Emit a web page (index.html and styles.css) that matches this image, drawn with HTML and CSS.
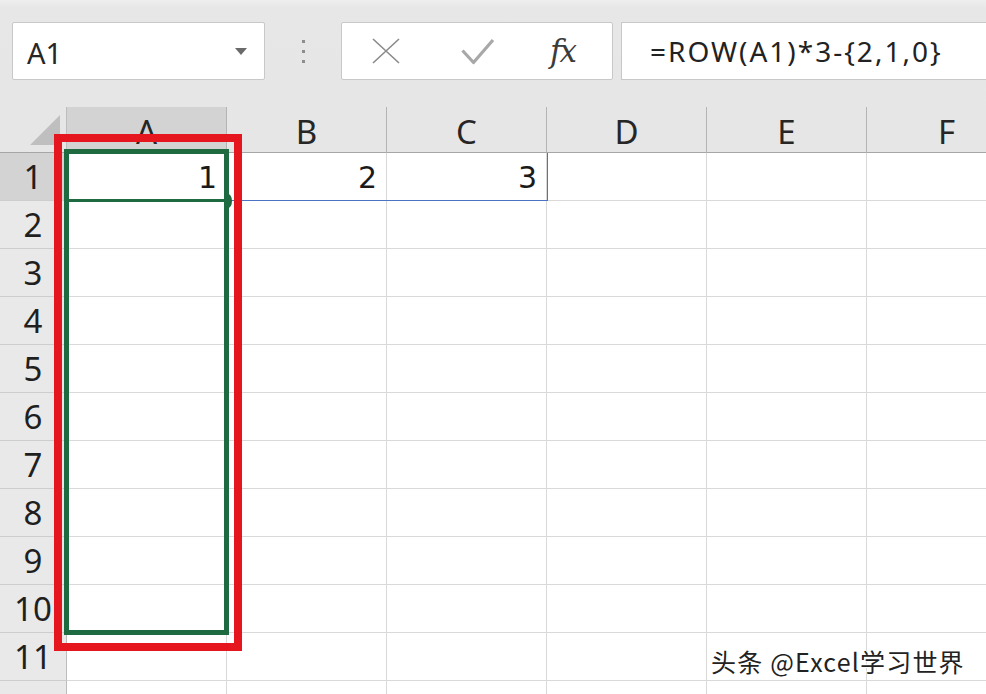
FILE: index.html
```html
<!DOCTYPE html>
<html lang="zh">
<head>
<meta charset="utf-8">
<title>Excel</title>
<link rel="stylesheet" href="styles.css">
</head>
<body>
<div class="app">
  <div class="toolbar">
    <div class="namebox">
      <span class="name">A1</span>
      <svg class="dd" width="12" height="7" viewBox="0 0 12 7"><path d="M0 0H12L6 7Z" fill="#6a6a6a"/></svg>
    </div>
    <div class="dots"><i></i><i></i><i></i></div>
    <div class="fxbtns">
      <svg class="ic-x" width="28" height="26" viewBox="0 0 28 26"><path d="M1 1L27 25M27 1L1 25" stroke="#8a8a8a" stroke-width="1.6" fill="none"/></svg>
      <svg class="ic-ok" width="34" height="28" viewBox="0 0 34 28"><path d="M1.5 12.5L12.5 24.5L32 2" stroke="#a8a8a8" stroke-width="3.2" fill="none" stroke-linejoin="round"/></svg>
      <span class="ic-fx">fx</span>
    </div>
    <div class="formula">=ROW(A1)*3-{2,1,0}</div>
  </div>
  <div class="sheet">
    <div class="grid">
      <div class="corner"><span class="tri"></span></div>
      <div class="ch sel">A</div>
      <div class="ch">B</div>
      <div class="ch">C</div>
      <div class="ch">D</div>
      <div class="ch">E</div>
      <div class="ch">F</div>

      <div class="rh sel">1</div><div class="c">1</div><div class="c">2</div><div class="c">3</div><div class="c"></div><div class="c"></div><div class="c"></div>
      <div class="rh">2</div><div class="c"></div><div class="c"></div><div class="c"></div><div class="c"></div><div class="c"></div><div class="c"></div>
      <div class="rh">3</div><div class="c"></div><div class="c"></div><div class="c"></div><div class="c"></div><div class="c"></div><div class="c"></div>
      <div class="rh">4</div><div class="c"></div><div class="c"></div><div class="c"></div><div class="c"></div><div class="c"></div><div class="c"></div>
      <div class="rh">5</div><div class="c"></div><div class="c"></div><div class="c"></div><div class="c"></div><div class="c"></div><div class="c"></div>
      <div class="rh">6</div><div class="c"></div><div class="c"></div><div class="c"></div><div class="c"></div><div class="c"></div><div class="c"></div>
      <div class="rh">7</div><div class="c"></div><div class="c"></div><div class="c"></div><div class="c"></div><div class="c"></div><div class="c"></div>
      <div class="rh">8</div><div class="c"></div><div class="c"></div><div class="c"></div><div class="c"></div><div class="c"></div><div class="c"></div>
      <div class="rh">9</div><div class="c"></div><div class="c"></div><div class="c"></div><div class="c"></div><div class="c"></div><div class="c"></div>
      <div class="rh">10</div><div class="c"></div><div class="c"></div><div class="c"></div><div class="c"></div><div class="c"></div><div class="c"></div>
      <div class="rh">11</div><div class="c"></div><div class="c"></div><div class="c"></div><div class="c"></div><div class="c"></div><div class="c"></div>
      <div class="rh"></div><div class="c"></div><div class="c"></div><div class="c"></div><div class="c"></div><div class="c"></div><div class="c"></div>
    </div>
    <div class="spill"></div>
    <div class="greenbox"></div>
    <div class="activeline"></div>
    <div class="handle"></div>
    <div class="redbox"></div>
  </div>
  <div class="watermark">头条 @Excel学习世界</div>
</div>
</body>
</html>
```
FILE: styles.css
```css
html, body {
  margin: 0;
  padding: 0;
  background: #ffffff;
}
body {
  width: 986px;
  height: 694px;
  overflow: hidden;
  font-family: "Noto Sans", "Open Sans", sans-serif;
}
.app {
  position: relative;
  width: 986px;
  height: 694px;
  overflow: hidden;
}
.toolbar {
  height: 107px;
  box-sizing: border-box;
  padding: 22px 0 0 12px;
  display: flex;
  align-items: flex-start;
  background: linear-gradient(#eeeeee 0px, #e7e7e7 8px, #e6e6e6 100%);
}
.toolbar > * {
  flex: none;
}
.namebox {
  width: 253px;
  height: 58px;
  box-sizing: border-box;
  background: #ffffff;
  border: 1px solid #c8c8c8;
  border-radius: 2px;
  display: flex;
  align-items: center;
  justify-content: space-between;
  padding: 0 17px 0 14px;
}
.name {
  font-size: 29px;
  color: #262626;
  line-height: 1;
  padding-top: 2px;
}
.dots {
  width: 76px;
  height: 58px;
  display: flex;
  flex-direction: column;
  align-items: center;
  justify-content: center;
  gap: 7px;
}
.dots i {
  display: block;
  width: 3px;
  height: 3px;
  background: #8d8d8d;
}
.fxbtns {
  width: 272px;
  height: 58px;
  box-sizing: border-box;
  background: #ffffff;
  border: 1px solid #c8c8c8;
  border-radius: 2px;
  display: flex;
  align-items: center;
}
.ic-x {
  margin-left: 30px;
}
.ic-ok {
  margin-left: 61px;
  margin-top: 2px;
}
.ic-fx {
  margin-left: 55px;
  font-family: "DejaVu Serif", "Liberation Serif", serif;
  font-style: italic;
  font-size: 31px;
  color: #3c3c3c;
  letter-spacing: -2px;
  line-height: 1;
}
.formula {
  margin-left: 8px;
  width: 420px;
  height: 58px;
  box-sizing: border-box;
  background: #ffffff;
  border: 1px solid #c8c8c8;
  border-right: none;
  display: flex;
  align-items: center;
  padding-left: 28px;
  font-size: 28px;
  letter-spacing: 2px;
  color: #222222;
  white-space: nowrap;
}
.sheet {
  position: relative;
  width: 986px;
}
.grid {
  display: grid;
  grid-template-columns: 67px repeat(6, 160px);
  grid-template-rows: 46px repeat(12, 48px);
}
.corner, .ch, .rh, .c {
  box-sizing: border-box;
}
.corner {
  background: #e6e6e6;
  border-right: 1px solid #bdbdbd;
  border-bottom: 1px solid #a6a6a6;
  position: relative;
}
.tri {
  position: absolute;
  right: 6px;
  bottom: 7px;
  width: 0;
  height: 0;
  border-left: 30px solid transparent;
  border-bottom: 30px solid #bfbfbf;
}
.ch {
  background: #e6e6e6;
  border-right: 1px solid #b4b4b4;
  border-bottom: 1px solid #a6a6a6;
  display: flex;
  align-items: center;
  justify-content: center;
  font-size: 33px;
  color: #262626;
  padding-top: 4px;
}
.rh {
  background: #e9e9e9;
  border-right: 1px solid #bdbdbd;
  border-bottom: 1px solid #cdcdcd;
  display: flex;
  align-items: center;
  justify-content: center;
  font-size: 33px;
  color: #1f1f1f;
}
.ch.sel, .rh.sel {
  background: #d3d3d3;
}
.c {
  background: #ffffff;
  border-right: 1px solid #d9d9d9;
  border-bottom: 1px solid #d9d9d9;
  display: flex;
  align-items: center;
  justify-content: flex-end;
  padding: 2px 9px 0 0;
  font-family: "DejaVu Sans", "Liberation Sans", sans-serif;
  font-size: 30px;
  color: #1a1a1a;
}
.spill {
  position: absolute;
  left: 227px;
  top: 46px;
  width: 321px;
  height: 48px;
  box-sizing: border-box;
  border-right: 1px solid #4a74c2;
  border-bottom: 1px solid #4a74c2;
}
.greenbox {
  position: absolute;
  left: 64px;
  top: 42px;
  width: 165px;
  height: 486px;
  box-sizing: border-box;
  border: 5px solid #1e6b42;
}
.activeline {
  position: absolute;
  left: 64px;
  top: 92px;
  width: 163px;
  height: 3px;
  background: #1e6b42;
}
.handle {
  position: absolute;
  left: 224px;
  top: 87px;
  width: 8px;
  height: 14px;
  border-radius: 50%;
  background: #1e6b42;
}
.redbox {
  position: absolute;
  left: 54px;
  top: 27px;
  width: 188px;
  height: 517px;
  box-sizing: border-box;
  border: 8px solid #e6161f;
}
.watermark {
  position: absolute;
  left: 711px;
  top: 643px;
  font-family: "Noto Sans CJK SC", "Noto Sans", sans-serif;
  font-size: 25px;
  color: #222222;
  letter-spacing: 1.2px;
  white-space: nowrap;
  text-shadow: 0 0 2px #ffffff, 0 0 2px #ffffff, 1px 1px 1px #ffffff, -1px -1px 1px #ffffff;
}
```
